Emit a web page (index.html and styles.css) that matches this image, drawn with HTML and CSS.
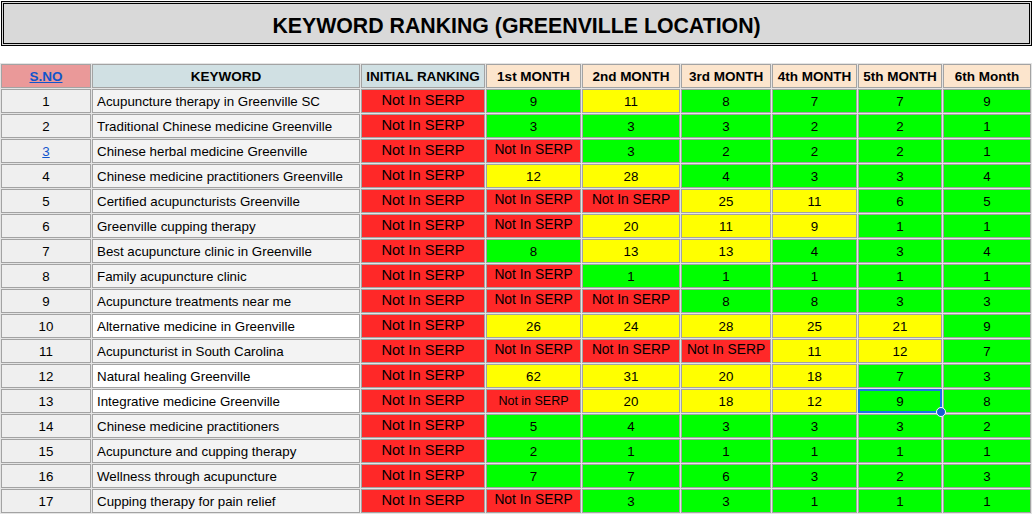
FILE: index.html
```html
<!DOCTYPE html>
<html>
<head>
<meta charset="utf-8">
<link rel="stylesheet" href="styles.css">
</head>
<body>
<div class="title">KEYWORD RANKING (GREENVILLE LOCATION)</div>
<table class="rank">
<thead>
<tr>
<th class="h-sno w-sno"><a href="#">S.NO</a></th>
<th class="h-blue w-kw">KEYWORD</th>
<th class="h-blue w-init">INITIAL RANKING</th>
<th class="h-month w-m1">1st MONTH</th>
<th class="h-month w-m2">2nd MONTH</th>
<th class="h-month w-m3">3rd MONTH</th>
<th class="h-month w-m4">4th MONTH</th>
<th class="h-month w-m5">5th MONTH</th>
<th class="h-month w-m6">6th Month</th>
</tr>
</thead>
<tbody>
<tr><td class="sno">1</td><td class="kw">Acupuncture therapy in Greenville SC</td><td class="init">Not In SERP</td><td class="g">9</td><td class="y">11</td><td class="g">8</td><td class="g">7</td><td class="g">7</td><td class="g">9</td></tr>
<tr><td class="sno">2</td><td class="kw">Traditional Chinese medicine Greenville</td><td class="init">Not In SERP</td><td class="g">3</td><td class="g">3</td><td class="g">3</td><td class="g">2</td><td class="g">2</td><td class="g">1</td></tr>
<tr><td class="sno"><a href="#">3</a></td><td class="kw">Chinese herbal medicine Greenville</td><td class="init">Not In SERP</td><td class="r">Not In SERP</td><td class="g">3</td><td class="g">2</td><td class="g">2</td><td class="g">2</td><td class="g">1</td></tr>
<tr><td class="sno">4</td><td class="kw">Chinese medicine practitioners Greenville</td><td class="init">Not In SERP</td><td class="y">12</td><td class="y">28</td><td class="g">4</td><td class="g">3</td><td class="g">3</td><td class="g">4</td></tr>
<tr><td class="sno">5</td><td class="kw">Certified acupuncturists Greenville</td><td class="init">Not In SERP</td><td class="r">Not In SERP</td><td class="r">Not In SERP</td><td class="y">25</td><td class="y">11</td><td class="g">6</td><td class="g">5</td></tr>
<tr><td class="sno">6</td><td class="kw">Greenville cupping therapy</td><td class="init">Not In SERP</td><td class="r">Not In SERP</td><td class="y">20</td><td class="y">11</td><td class="y">9</td><td class="g">1</td><td class="g">1</td></tr>
<tr><td class="sno">7</td><td class="kw">Best acupuncture clinic in Greenville</td><td class="init">Not In SERP</td><td class="g">8</td><td class="y">13</td><td class="y">13</td><td class="g">4</td><td class="g">3</td><td class="g">4</td></tr>
<tr><td class="sno">8</td><td class="kw">Family acupuncture clinic</td><td class="init">Not In SERP</td><td class="r">Not In SERP</td><td class="g">1</td><td class="g">1</td><td class="g">1</td><td class="g">1</td><td class="g">1</td></tr>
<tr><td class="sno">9</td><td class="kw">Acupuncture treatments near me</td><td class="init">Not In SERP</td><td class="r">Not In SERP</td><td class="r">Not In SERP</td><td class="g">8</td><td class="g">8</td><td class="g">3</td><td class="g">3</td></tr>
<tr><td class="sno">10</td><td class="kw white">Alternative medicine in Greenville</td><td class="init">Not In SERP</td><td class="y">26</td><td class="y">24</td><td class="y">28</td><td class="y">25</td><td class="y">21</td><td class="g">9</td></tr>
<tr><td class="sno">11</td><td class="kw">Acupuncturist in South Carolina</td><td class="init">Not In SERP</td><td class="r">Not In SERP</td><td class="r">Not In SERP</td><td class="r">Not In SERP</td><td class="y">11</td><td class="y">12</td><td class="g">7</td></tr>
<tr><td class="sno">12</td><td class="kw white">Natural healing Greenville</td><td class="init">Not In SERP</td><td class="y">62</td><td class="y">31</td><td class="y">20</td><td class="y">18</td><td class="g">7</td><td class="g">3</td></tr>
<tr><td class="sno">13</td><td class="kw white">Integrative medicine Greenville</td><td class="init">Not In SERP</td><td class="r small">Not in SERP</td><td class="y">20</td><td class="y">18</td><td class="y">12</td><td class="g selected">9</td><td class="g">8</td></tr>
<tr><td class="sno">14</td><td class="kw">Chinese medicine practitioners</td><td class="init">Not In SERP</td><td class="g">5</td><td class="g">4</td><td class="g">3</td><td class="g">3</td><td class="g">3</td><td class="g">2</td></tr>
<tr><td class="sno">15</td><td class="kw">Acupuncture and cupping therapy</td><td class="init">Not In SERP</td><td class="g">2</td><td class="g">1</td><td class="g">1</td><td class="g">1</td><td class="g">1</td><td class="g">1</td></tr>
<tr><td class="sno">16</td><td class="kw">Wellness through acupuncture</td><td class="init">Not In SERP</td><td class="g">7</td><td class="g">7</td><td class="g">6</td><td class="g">3</td><td class="g">2</td><td class="g">3</td></tr>
<tr><td class="sno">17</td><td class="kw">Cupping therapy for pain relief</td><td class="init">Not In SERP</td><td class="r">Not In SERP</td><td class="g">3</td><td class="g">3</td><td class="g">1</td><td class="g">1</td><td class="g">1</td></tr>
</tbody>
</table>
</body>
</html>
```
FILE: styles.css
```css
html, body {
  margin: 0;
  padding: 0;
  background: #ffffff;
}
body {
  font-family: "Liberation Sans", Arial, sans-serif;
  color: #000;
}
.title {
  margin: 1px 0 0 1px;
  width: 1031px;
  height: 45px;
  box-sizing: border-box;
  border: 3px double #000;
  background: #d9d9d9;
  text-align: center;
  font-weight: bold;
  font-size: 21.3px;
  line-height: 24px;
  padding-top: 10px;
}
.rank {
  margin-top: 17px;
  table-layout: fixed;
  width: 1032px;
  border-collapse: separate;
  border-spacing: 1px;
  background: #e4e4e4;
}
.rank th, .rank td {
  box-sizing: border-box;
  border: 1px solid #a3a3a3;
  height: 24px;
  padding: 0 2px;
  text-align: center;
  vertical-align: middle;
  font-size: 13.33px;
  white-space: nowrap;
  overflow: hidden;
}
.rank th {
  font-weight: bold;
  font-size: 13.5px;
}
.rank a {
  color: #1155cc;
  text-decoration: underline;
}
.w-sno { width: 90px; }
.w-kw { width: 268px; }
.w-init { width: 124px; }
.w-m1 { width: 95px; }
.w-m2 { width: 98px; }
.w-m3 { width: 90px; }
.w-m4 { width: 85px; }
.w-m5 { width: 84px; }
.w-m6 { width: 88px; }
.h-sno { background: #ea9999; }
.h-blue { background: #d0e0e3; }
.h-month { background: #fce5cd; }
.rank td.sno { background: #efefef; }
.rank td.kw {
  background: #f3f3f3;
  text-align: left;
  padding-left: 4px;
}
.rank td.kw.white { background: #ffffff; }
.rank td.init {
  background: #ff2828;
  font-size: 14.67px;
  padding-bottom: 3px;
}
.rank td.g { background: #00ff00; }
.rank td.y { background: #ffff00; }
.rank td.r {
  background: #ff2828;
  font-size: 13.8px;
  padding-bottom: 3px;
}
.rank td.r.small {
  font-size: 12.5px;
  padding-bottom: 0;
}
.rank td.selected {
  position: relative;
  overflow: visible;
  border: 2px solid #1a73e8;
}
.rank td.selected::after {
  content: "";
  position: absolute;
  right: -6px;
  bottom: -6px;
  width: 8px;
  height: 8px;
  border-radius: 50%;
  background: #1a5fd0;
  border: 1px solid #ffffff;
}
```
